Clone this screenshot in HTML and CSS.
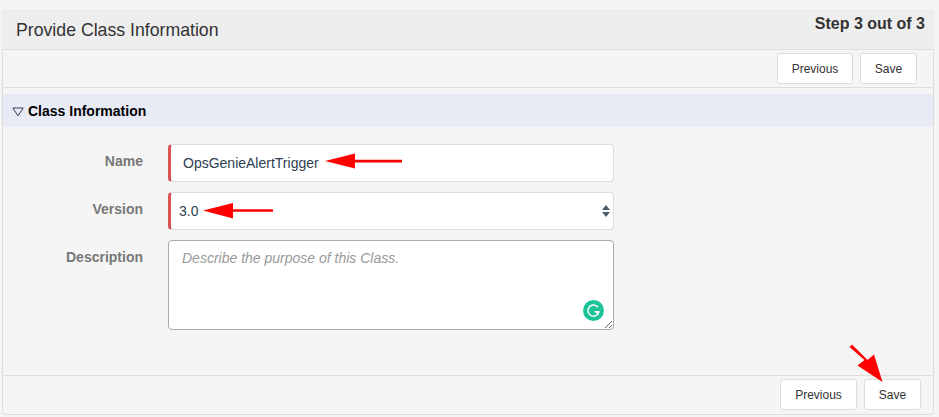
FILE: index.html
```html
<!DOCTYPE html>
<html lang="en">
<head>
  <meta charset="UTF-8">
  <meta name="viewport" content="width=device-width, initial-scale=1.0">
  <title>Provide Class Information</title>
  <link rel="stylesheet" href="styles.css">
</head>
<body>
  <div class="panel">
    <div class="panel-header">
      <h1>Provide Class Information</h1>
      <div class="step">Step 3 out of 3</div>
    </div>
    <div class="toolbar toolbar-top">
      <button type="button" class="button button-prev">Previous</button>
      <button type="button" class="button button-save">Save</button>
    </div>
    <div class="section-title">
      <svg class="caret" width="12" height="10" viewBox="0 0 12 10"><path d="M0.8 1H11.2L6 8.8Z" fill="none" stroke="#2a2440" stroke-width="0.9"/></svg>
      <span>Class Information</span>
    </div>
    <form class="class-form">
      <div class="form-row">
        <label for="name">Name</label>
        <input type="text" id="name" class="field field-required field-name" value="OpsGenieAlertTrigger">
      </div>
      <div class="form-row">
        <label for="version">Version</label>
        <div class="select-wrap">
          <select id="version" class="field field-required field-version">
            <option>3.0</option>
          </select>
        </div>
      </div>
      <div class="form-row">
        <label for="description">Description</label>
        <div class="textarea-wrap">
          <textarea id="description" class="field field-desc" placeholder="Describe the purpose of this Class."></textarea>
          <svg class="grammarly" width="21" height="21" viewBox="0 0 22 22">
            <circle cx="11" cy="11" r="11" fill="#1dc297"/>
            <path d="M15.6 7.6A5.8 5.8 0 1 0 16.6 12.4H12" fill="none" stroke="#fff" stroke-width="1.5"/>
            <path d="M16.4 12V15.8L12.6 12.4Z" fill="#fff"/>
          </svg>
        </div>
      </div>
    </form>
    <div class="toolbar toolbar-bottom">
      <button type="button" class="button button-prev">Previous</button>
      <button type="button" class="button button-save">Save</button>
    </div>
  </div>

  <!-- red annotation arrows drawn on top of the screenshot -->
  <svg class="arrows" width="939" height="417" viewBox="0 0 939 417">
    <path d="M325 161L355 153.500V159.800H402V162.500H355V168.500Z" fill="#f00"/>
    <path d="M203 210.500L233 203V209.300H273V211.800H233V218.500Z" fill="#f00"/>
    <path d="M849.500 347L852 344.500L867.500 360L874 354.500L882.500 382L857.500 365.500L864.500 360Z" fill="#f00"/>
  </svg>
</body>
</html>
```
FILE: styles.css
```css
* {
  box-sizing: border-box;
}
body {
  font-family: "Liberation Sans", Arial, sans-serif;
  margin: 0;
  padding: 9px 5px 0 2px;
  background-color: #f5f5f5;
  position: relative;
  height: 417px;
  overflow: hidden;
}
.panel {
  height: 406px;
  border: 1px solid #ddd;
  border-top: none;
  border-radius: 4px;
  display: flex;
  flex-direction: column;
}
.panel-header {
  height: 41px;
  margin: 0 -1px;
  padding: 0 9px 0 14px;
  background-color: #eee;
  border-bottom: 1px solid #ddd;
  border-radius: 4px 4px 0 0;
  display: flex;
  justify-content: space-between;
}
h1 {
  margin: 0;
  padding-top: 1px;
  font-size: 17.7px;
  font-weight: normal;
  line-height: 41px;
  color: #333;
}
.step {
  margin-top: 6px;
  font-size: 16px;
  font-weight: bold;
  line-height: 17px;
  color: #333;
}
.toolbar {
  display: flex;
  justify-content: flex-end;
  gap: 7px;
}
.toolbar-top {
  height: 38px;
  padding: 3px 16px 0 0;
  border-bottom: 1px solid #ddd;
}
.toolbar-bottom {
  height: 39px;
  margin-top: auto;
  padding: 3px 12px 0 0;
  border-top: 1px solid #ddd;
}
.button {
  height: 31px;
  padding: 0;
  font-family: inherit;
  font-size: 12px;
  color: #333;
  background-color: #fff;
  border: 1px solid #ddd;
  border-radius: 3px;
}
.button-prev {
  width: 76px;
}
.button-save {
  width: 57px;
}
.toolbar-bottom .button-prev {
  width: 77px;
}
.section-title {
  height: 33px;
  margin-top: 6px;
  padding-left: 9px;
  background-color: #e8eaf6;
  display: flex;
  align-items: center;
  gap: 5px;
  font-size: 14px;
  font-weight: bold;
  color: #000;
}
.caret {
  margin-top: 2px;
  margin-right: -1px;
}
.class-form {
  padding-top: 17px;
  display: flex;
  flex-direction: column;
  gap: 10px;
}
.form-row {
  display: flex;
  gap: 25px;
  align-items: flex-start;
}
label {
  width: 140px;
  text-align: right;
  font-size: 14px;
  font-weight: bold;
  line-height: 16px;
  padding-top: 9px;
  color: #777;
}
.field {
  display: block;
  width: 446px;
  height: 38px;
  font-family: inherit;
  font-size: 14px;
  color: #2c3e50;
  background-color: #fff;
  border: 1px solid #ddd;
  border-radius: 4px;
  outline: none;
}
.field-required {
  border-left: 3px solid #d9534f;
}
.field-name {
  padding: 0 12px;
}
.field-version {
  padding: 0 8px;
  appearance: none;
}
.select-wrap {
  position: relative;
}
.select-wrap::before,
.select-wrap::after {
  content: "";
  position: absolute;
  right: 4px;
  border-left: 4px solid transparent;
  border-right: 4px solid transparent;
}
.select-wrap::before {
  top: 13px;
  border-bottom: 5px solid #4b5c6b;
}
.select-wrap::after {
  top: 20px;
  border-top: 5px solid #4b5c6b;
}
.textarea-wrap {
  position: relative;
}
.field-desc {
  height: 90px;
  padding: 9px 13px;
  border-color: #aaa;
}
.field-desc::placeholder {
  font-style: italic;
  color: #999;
}
.grammarly {
  position: absolute;
  right: 10px;
  bottom: 9px;
}
.arrows {
  position: absolute;
  left: 0;
  top: 0;
  pointer-events: none;
}
```
